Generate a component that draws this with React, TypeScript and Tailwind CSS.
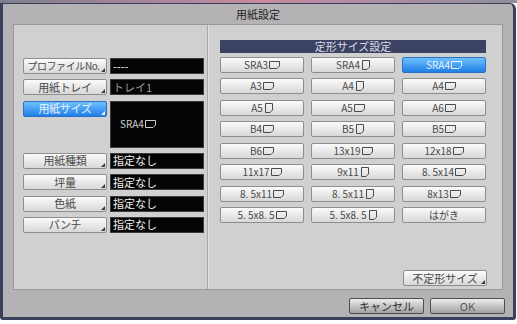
import React from "react";

type Orient = "L" | "P" | null;

const Paper = ({ o }: { o: Orient }) => {
  if (o === "L")
    return (
      <svg width="11" height="8" viewBox="0 0 11 8" className="ml-[1px] inline-block">
        <path d="M0.5 0.5H10.5V5L8 7.5H0.5Z" fill="none" stroke="currentColor" strokeWidth="1" />
      </svg>
    );
  if (o === "P")
    return (
      <svg width="8" height="10" viewBox="0 0 8 10" className="ml-[2px] inline-block">
        <path d="M0.5 0.5H7.5V7L5 9.5H0.5Z" fill="none" stroke="currentColor" strokeWidth="1" />
      </svg>
    );
  return null;
};

const sizes: [string, Orient][] = [
  ["SRA3", "L"], ["SRA4", "P"], ["SRA4", "L"],
  ["A3", "L"], ["A4", "P"], ["A4", "L"],
  ["A5", "P"], ["A5", "L"], ["A6", "L"],
  ["B4", "L"], ["B5", "P"], ["B5", "L"],
  ["B6", "L"], ["13x19", "L"], ["12x18", "L"],
  ["11x17", "L"], ["9x11", "P"], ["8. 5x14", "L"],
  ["8. 5x11", "L"], ["8. 5x11", "P"], ["8x13", "L"],
  ["5. 5x8. 5", "L"], ["5. 5x8. 5", "P"], ["はがき", null],
];

const Corner = ({ light }: { light?: boolean }) => (
  <span
    className={`absolute right-[1px] bottom-[1px] h-0 w-0 border-l-[4px] border-l-transparent border-b-[4px] ${
      light ? "border-b-[#e8f2ff]" : "border-b-[#3a3a3a]"
    }`}
  />
);

const SideButton = ({ label, active, small }: { label: string; active?: boolean; small?: boolean }) => (
  <div
    className={`relative flex h-[16px] w-[84px] items-center justify-center whitespace-nowrap rounded-[2px] border leading-none ${
      small ? "pr-[3px] text-[10px] tracking-[-0.4px]" : "text-[11px] tracking-[-0.3px]"
    } ${
      active
        ? "border-[#2d6fc4] bg-gradient-to-b from-[#6cc0ff] to-[#1f7fe6] text-[#eaf3ff]"
        : "border-[#8e8e8e] bg-gradient-to-b from-[#fbfbfb] to-[#d8d8d8] text-[#4a4a4a]"
    }`}
  >
    {label}
    <Corner light={active} />
  </div>
);

const Row = ({ label, value, dim, small }: { label: string; value: string; dim?: boolean; small?: boolean }) => (
  <div className="flex h-[16px] gap-[3px]">
    <SideButton label={label} small={small} />
    <div
      className={`flex w-[94px] items-center border border-[#3c3c3c] bg-[#050505] pl-[2px] text-[11px] leading-none ${
        dim ? "text-[#9c9c9c]" : "text-[#f2f2f2]"
      }`}
    >
      {value}
    </div>
  </div>
);

export default function App() {
  return (
    <div className="h-[324px] w-[517px] overflow-hidden bg-white font-['Noto_Sans_CJK_JP',sans-serif]">
      {/* background strip */}
      <div className="h-[3px] bg-gradient-to-r from-[#7d7f8c] via-[#c68aa2] to-[#8e8f9c]" />

      <div className="flex h-[317px] w-[516px] flex-col rounded-tr-[6px] rounded-b-[3px] border-x-[3px] border-t border-b-[3px] border-[#3a3f5c] bg-[#b5b2b5]">
        {/* title */}
        <div className="flex h-[20px] items-center justify-center text-[11px] text-[#1e1e1e]">
          用紙設定
        </div>

        {/* main panel */}
        <div className="mx-[10px] flex h-[266px] border border-[#9a989a] bg-[#d0d0d0]">
          {/* left */}
          <div className="flex w-[194px] flex-col gap-[5.33px] border-r border-[#a9a7a9] pl-[9px] pt-[33px]">
            <Row label="プロファイルNo." value="----" small />
            <Row label="用紙トレイ" value="トレイ1" dim />
            <div className="flex h-[47px] gap-[3px]">
              <SideButton label="用紙サイズ" active />
              <div className="flex w-[94px] items-center border border-[#3c3c3c] bg-[#050505] pl-[9px] text-[10px] leading-none text-[#cfcfcf]">
                SRA4
                <Paper o="L" />
              </div>
            </div>
            <Row label="用紙種類" value="指定なし" />
            <Row label="坪量" value="指定なし" />
            <Row label="色紙" value="指定なし" />
            <Row label="パンチ" value="指定なし" />
          </div>

          {/* right */}
          <div className="flex flex-1 flex-col border-l border-[#e2e2e2] pl-[11px] pt-[15px] pb-[3px]">
            <div className="flex w-[266px] flex-col">
              <div className="flex h-[13px] items-center justify-center bg-[#3b4262] text-[11px] leading-none text-[#dcdde4]">
                定形サイズ設定
              </div>
              <div className="mt-[4px] grid grid-cols-3 auto-rows-[16px] gap-x-[7px] gap-y-[5.43px]">
                {sizes.map(([t, o], i) => {
                  const sel = i === 2;
                  return (
                    <div
                      key={i}
                      className={`flex items-center justify-center rounded-[2px] border text-[10px] leading-none ${
                        sel
                          ? "border-[#2d6fc4] bg-gradient-to-b from-[#6cc0ff] to-[#1f7fe6] text-[#eaf3ff]"
                          : "border-[#8e8e8e] bg-gradient-to-b from-[#fbfbfb] to-[#d8d8d8] text-[#4a4a4a]"
                      }`}
                    >
                      {t}
                      <Paper o={o} />
                    </div>
                  );
                })}
              </div>
            </div>
            <div className="mt-auto flex w-[267px] justify-end">
              <div className="relative flex h-[16px] w-[84px] items-center justify-center rounded-[2px] border border-[#8e8e8e] bg-gradient-to-b from-[#fbfbfb] to-[#d8d8d8] text-[11px] leading-none text-[#4a4a4a]">
                不定形サイズ
                <Corner />
              </div>
            </div>
          </div>
        </div>

        {/* bottom buttons */}
        <div className="flex justify-end gap-[6px] pr-[8px] pt-[8px]">
          <div className="flex h-[16px] w-[75px] items-center justify-center rounded-[2px] border border-[#4e4e4e] bg-gradient-to-b from-[#ececec] to-[#a2a2a2] text-[11px] leading-none text-[#2e2e2e]">
            キャンセル
          </div>
          <div className="flex h-[16px] w-[75px] items-center justify-center rounded-[2px] border border-[#4e4e4e] bg-gradient-to-b from-[#ececec] to-[#a2a2a2] text-[11px] leading-none text-[#5a5a5a]">
            OK
          </div>
        </div>
      </div>
    </div>
  );
}
